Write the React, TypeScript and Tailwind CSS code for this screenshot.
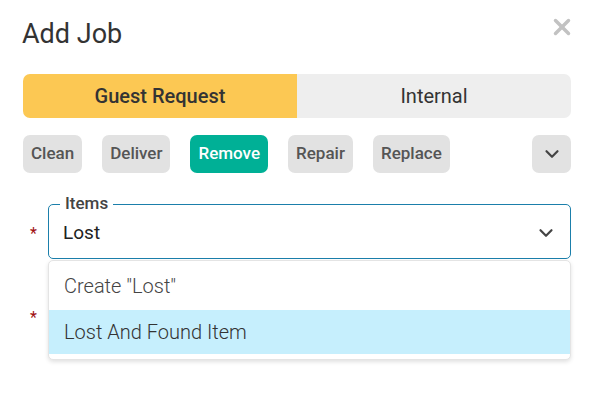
import { X, ChevronDown } from "lucide-react";

const actions = ["Clean", "Deliver", "Remove", "Repair", "Replace"];

export default function App() {
  return (
    <div className="w-[590px] h-[420px] bg-white font-['Roboto','Liberation_Sans',sans-serif] relative overflow-hidden">
      <div className="pl-[23px] pr-[19px] pt-[16px]">
        {/* Header */}
        <div className="flex items-start justify-between">
          <h1 className="text-[27px] leading-[36px] text-[#333] -ml-[1px]">Add Job</h1>
          <button className="text-[#c2c2c2] mt-[-2px] mr-[-4px]">
            <X className="w-[26px] h-[26px]" strokeWidth={3.2} />
          </button>
        </div>

        {/* Type toggle */}
        <div className="mt-[22px] flex h-[44px] rounded-[7px] overflow-hidden">
          <div className="flex-1 bg-[#fcc853] flex items-center justify-center text-[20px] font-medium text-[#333]">
            Guest Request
          </div>
          <div className="flex-1 bg-[#eeeeee] flex items-center justify-center text-[20px] text-[#333]">
            Internal
          </div>
        </div>

        {/* Action chips */}
        <div className="mt-[17px] flex items-center h-[38px]">
          <div className="flex gap-[20px]">
            {actions.map((a) => (
              <div
                key={a}
                className={
                  a === "Remove"
                    ? "h-[38px] px-[8px] rounded-[7px] bg-[#00b096] text-white flex items-center text-[17px] font-medium"
                    : "h-[38px] px-[8px] rounded-[7px] bg-[#e2e2e2] text-[#555] flex items-center text-[17px] font-medium"
                }
              >
                {a}
              </div>
            ))}
          </div>
          <div className="ml-auto w-[39px] h-[38px] rounded-[7px] bg-[#e2e2e2] flex items-center justify-center text-[#444]">
            <ChevronDown className="w-[22px] h-[22px]" strokeWidth={2.4} />
          </div>
        </div>

        {/* Items field */}
        <div className="mt-[31px] flex items-center">
          <span className="w-[25px] text-[#a01010] text-[16px] pl-[7px] pt-[4px]">*</span>
          <div className="relative flex-1 h-[55px] border border-[#1b7fab] rounded-[5px] flex items-center pl-[14px] pr-[13px]">
            <span className="absolute -top-[14px] left-[11px] bg-white px-[5px] text-[17px] font-medium text-[#444] leading-[24px]">
              Items
            </span>
            <span className="text-[19px] text-[#222] mt-[3px]">Lost</span>
            <ChevronDown className="ml-auto w-[22px] h-[22px] text-[#444] mt-[2px]" strokeWidth={2.4} />
          </div>
        </div>

        {/* Second field (under dropdown) */}
        <div className="mt-[32px] flex items-center">
          <span className="w-[25px] text-[#a01010] text-[16px] pl-[7px] pt-[4px]">*</span>
          <div className="flex-1 h-[50px]" />
        </div>
      </div>

      {/* Dropdown menu */}
      <div className="absolute left-[48px] top-[260px] w-[523px] bg-white rounded-[5px] border border-[#e4e4e4] shadow-[0_2px_4px_rgba(0,0,0,0.12)] overflow-hidden">
        <div className="h-[49px] flex items-center pl-[15px] text-[20px] font-light text-[#444]">
          Create "Lost"
        </div>
        <div className="h-[44px] flex items-center pl-[15px] bg-[#c6effd] text-[20px] font-light text-[#333]">
          Lost And Found Item
        </div>
        <div className="h-[5px]" />
      </div>
    </div>
  );
}
